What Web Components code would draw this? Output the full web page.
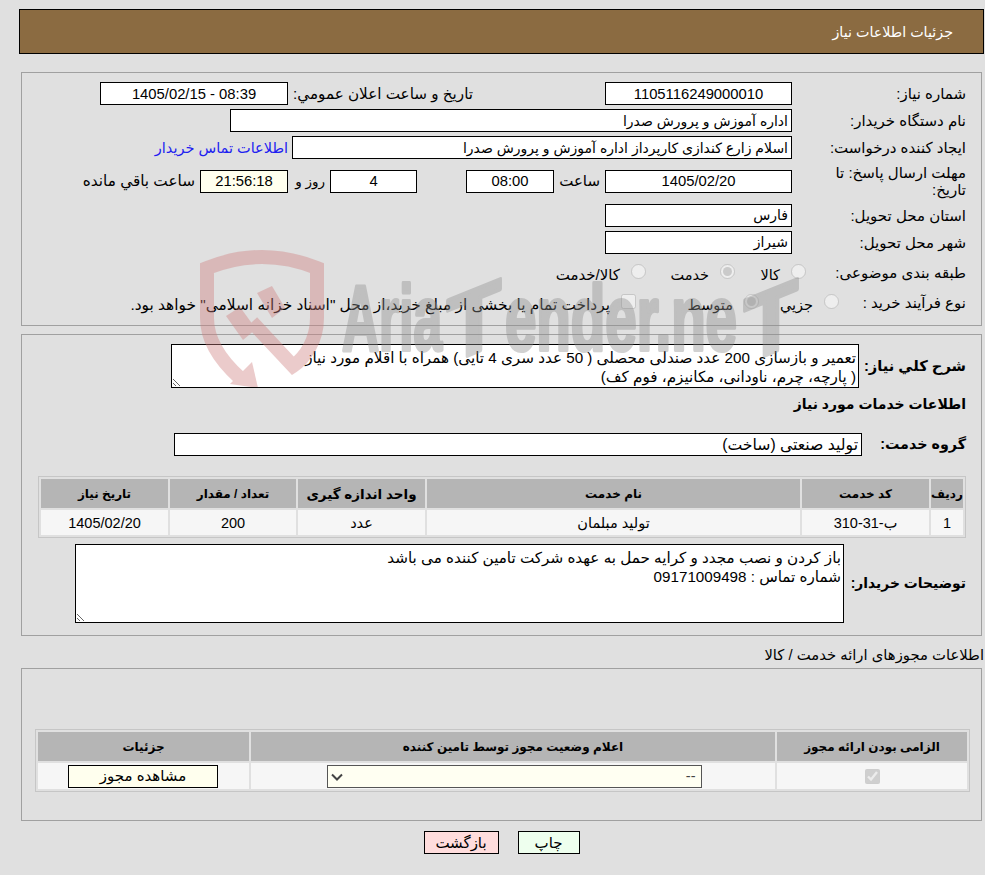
<!DOCTYPE html>
<html lang="fa" dir="rtl">
<head>
<meta charset="utf-8">
<title>جزئیات اطلاعات نیاز</title>
<style>
  html, body { margin: 0; padding: 0; background: #e0e0e0; }
  body {
    position: relative;
    height: 875px;
    overflow: hidden;
    font: 14.5px "Liberation Sans", "DejaVu Sans", sans-serif;
    color: #000;
  }
</style>
</head>
<body>
  <page-header>جزئیات اطلاعات نیاز</page-header>

  <info-panel style="margin-top:18px;height:254px">
    <form-row height="27" label="شماره نیاز:">
      <text-field center numeric style="width:187px">1105116249000010</text-field>
      <plain-text style="width:180px;margin-right:132px;font-size:15.2px">تاریخ و ساعت اعلان عمومي:</plain-text>
      <text-field center numeric dir="ltr" style="width:188px;margin-right:5px">1405/02/15 - 08:39</text-field>
    </form-row>
    <form-row height="27" label="نام دستگاه خریدار:">
      <text-field style="width:562px">اداره آموزش و پرورش صدرا</text-field>
    </form-row>
    <form-row height="27" label="ایجاد کننده درخواست:">
      <text-field style="width:500px">اسلام زارع کندازی کارپرداز اداره آموزش و پرورش صدرا</text-field>
      <plain-text style="color:#2020f0;margin-right:4px">اطلاعات تماس خریدار</plain-text>
    </form-row>
    <form-row height="40" label="مهلت ارسال پاسخ: تا&#10;تاریخ:">
      <text-field center numeric style="width:187px">1405/02/20</text-field>
      <plain-text style="width:51px;padding-right:5px;box-sizing:border-box;font-size:15px">ساعت</plain-text>
      <text-field center numeric style="width:88px">08:00</text-field>
      <text-field center numeric style="width:87px;margin-right:49px">4</text-field>
      <plain-text style="width:42px;padding-right:5px;box-sizing:border-box;font-size:13.5px">روز و</plain-text>
      <text-field center numeric style="width:88px;background:#ffffee">21:56:18</text-field>
      <plain-text style="margin-right:5px;font-size:15.3px">ساعت باقي مانده</plain-text>
    </form-row>
    <form-row height="28" label="استان محل تحویل:">
      <text-field style="width:187px">فارس</text-field>
    </form-row>
    <form-row height="26" label="شهر محل تحویل:">
      <text-field style="width:187px">شیراز</text-field>
    </form-row>
    <form-row height="34" label="طبقه بندی موضوعی:">
      <choice-item style="width:71px;margin:6px -14px 0 0" kind="radio">کالا</choice-item>
      <choice-item style="width:89px;margin-top:6px" kind="radio" checked>خدمت</choice-item>
      <choice-item style="margin-top:6px;font-size:15px" kind="radio">کالا/خدمت</choice-item>
    </form-row>
    <form-row height="26" label="نوع فرآیند خرید :">
      <choice-item style="width:80px;margin:6px -47px 0 0" kind="radio">جزیي</choice-item>
      <choice-item style="width:123px;margin-top:6px" kind="radio" checked>متوسط</choice-item>
      <choice-item style="margin-top:6px;font-size:15.4px" kind="checkbox">پرداخت تمام یا بخشی از مبلغ خرید،از محل "اسناد خزانه اسلامی" خواهد بود.</choice-item>
    </form-row>
  </info-panel>

  <info-panel style="margin-top:8px;height:302px;padding-top:9px">
    <form-row height="44" label-width="107" bold size="14.7" label="شرح کلي نیاز:">
      <note-box style="width:688px;height:44px">تعمیر و بازسازی 200 عدد صندلی محصلی ( 50 عدد سری 4 تایی) همراه با اقلام مورد نیاز
( پارچه، چرم، ناودانی، مکانیزم، فوم کف)</note-box>
    </form-row>
    <form-row height="32" label-width="400" bold size="14" label="اطلاعات خدمات مورد نیاز"></form-row>
    <form-row height="23" label-width="104" bold size="14.3" label="گروه خدمت:" style="margin-top:13px">
      <text-field style="width:688px;font-size:15.7px">تولید صنعتی (ساخت)</text-field>
    </form-row>
    <data-table columns="32px 127px 373px 127px 126px 127px" row-height="25px" style="margin:20px 0 0 15px;width:928px">
      <table-cell head>ردیف</table-cell>
      <table-cell head>کد خدمت</table-cell>
      <table-cell head>نام خدمت</table-cell>
      <table-cell head style="font-size:13.5px">واحد اندازه گیری</table-cell>
      <table-cell head>تعداد / مقدار</table-cell>
      <table-cell head>تاریخ نیاز</table-cell>
      <table-cell>1</table-cell>
      <table-cell>ب-31-310</table-cell>
      <table-cell>تولید مبلمان</table-cell>
      <table-cell>عدد</table-cell>
      <table-cell>200</table-cell>
      <table-cell>1405/02/20</table-cell>
    </data-table>
    <form-row height="79" label-width="122" bold size="13.9" label="توضیحات خریدار:" style="margin-top:6px">
      <note-box style="width:769px;height:79px">باز کردن و نصب مجدد و کرایه حمل به عهده شرکت تامین کننده می باشد
شماره تماس : 09171009498</note-box>
    </form-row>
  </info-panel>

  <section-title>اطلاعات مجوزهای ارائه خدمت / کالا</section-title>

  <info-panel style="height:153px">
    <data-table columns="190px 524px 211px" row-height="26px" style="margin:53px -4px 0 0;width:935px">
      <table-cell head>الزامی بودن ارائه مجوز</table-cell>
      <table-cell head>اعلام وضعیت مجوز توسط تامین کننده</table-cell>
      <table-cell head>جزئیات</table-cell>
      <table-cell><choice-item kind="checkbox" checked style="margin-top:8px"></choice-item></table-cell>
      <table-cell><status-select style="margin-left:2px"></status-select></table-cell>
      <table-cell><action-button style="width:150px;margin-right:1px;background:#ffffee">مشاهده مجوز</action-button></table-cell>
    </data-table>
  </info-panel>

  <action-bar>
    <action-button style="width:62px;background:#eeffee">چاپ</action-button>
    <action-button style="width:75px;background:#ffdddd">بازگشت</action-button>
  </action-bar>

  <tender-watermark></tender-watermark>

<script>
  class PageHeader extends HTMLElement {
    constructor() {
      super();
      this.attachShadow({ mode: "open" }).innerHTML = `
        <style>
          :host {
            display: flex;
            align-items: center;
            box-sizing: border-box;
            height: 45px;
            margin: 9px 1px 0 0;
            width: 965px;
            padding: 0 30px;
            background: #8b6b41;
            border: 1px solid #000;
            color: #fff;
            font-size: 14.3px;
          }
        </style>
        <slot></slot>`;
    }
  }

  class InfoPanel extends HTMLElement {
    constructor() {
      super();
      this.attachShadow({ mode: "open" }).innerHTML = `
        <style>
          :host {
            display: block;
            box-sizing: border-box;
            width: 961px;
            margin-right: 3px;
            padding: 7px 15px 0 0;
            border: 1px solid #a0a0a0;
          }
        </style>
        <slot></slot>`;
    }
  }

  class FormRow extends HTMLElement {
    constructor() {
      super();
      const label = this.getAttribute("label") || "";
      const labelWidth = this.getAttribute("label-width") || "174";
      const height = this.getAttribute("height") || "27";
      const weight = this.hasAttribute("bold") ? "700" : "400";
      const size = this.getAttribute("size") || "15";
      this.attachShadow({ mode: "open" }).innerHTML = `
        <style>
          :host {
            display: flex;
            align-items: center;
            height: ${height}px;
          }
          .label {
            flex: 0 0 ${labelWidth}px;
            min-width: 0;
            box-sizing: border-box;
            line-height: 17px;
            white-space: pre;
            font-weight: ${weight};
            font-size: ${size}px;
          }
        </style>
        <div class="label">${label}</div>
        <slot></slot>`;
    }
  }

  class PlainText extends HTMLElement {
    constructor() {
      super();
      this.attachShadow({ mode: "open" }).innerHTML = `
        <style>
          :host { display: block; flex: none; white-space: nowrap; }
        </style>
        <slot></slot>`;
    }
  }

  class TextField extends HTMLElement {
    constructor() {
      super();
      const align = this.hasAttribute("center") ? "center" : "start";
      const size = this.hasAttribute("numeric") ? "14.8px" : "14px";
      this.attachShadow({ mode: "open" }).innerHTML = `
        <style>
          :host {
            display: flex;
            flex: none;
            align-items: center;
            justify-content: ${align};
            box-sizing: border-box;
            height: 23px;
            padding: 0 3px;
            background: #fff;
            border: 1px solid #000;
            font-size: ${size};
            white-space: nowrap;
            overflow: hidden;
          }
        </style>
        <slot></slot>`;
    }
  }

  class NoteBox extends HTMLElement {
    constructor() {
      super();
      const root = this.attachShadow({ mode: "open" });
      root.innerHTML = `
        <style>
          :host { display: block; flex: none; }
          textarea {
            display: block;
            box-sizing: border-box;
            width: 100%;
            height: 100%;
            margin: 0;
            padding: 4px 2px;
            font: inherit;
            font-size: 15.2px;
            line-height: 18.5px;
            color: inherit;
            background: #fff;
            border: 1px solid #000;
            border-radius: 0;
            outline: none;
            overflow: hidden;
            resize: both;
          }
        </style>
        <textarea readonly dir="rtl"></textarea>`;
      root.querySelector("textarea").textContent = this.textContent;
    }
  }

  class ChoiceItem extends HTMLElement {
    constructor() {
      super();
      const kind = this.getAttribute("kind") || "radio";
      const checked = this.hasAttribute("checked") ? "checked" : "";
      this.attachShadow({ mode: "open" }).innerHTML = `
        <style>
          :host {
            display: flex;
            flex: none;
            align-items: center;
            gap: 5px;
            white-space: nowrap;
          }
          input {
            width: 15px;
            height: 15px;
            margin: -8px 0 0 0;
            flex: none;
          }
          .text { margin-right: 6px; }
          :host(:empty) .text { display: none; }
        </style>
        <input type="${kind}" disabled ${checked}>
        <span class="text"><slot></slot></span>`;
    }
  }

  class DataTable extends HTMLElement {
    constructor() {
      super();
      const columns = this.getAttribute("columns");
      const rowHeight = this.getAttribute("row-height");
      this.attachShadow({ mode: "open" }).innerHTML = `
        <style>
          :host {
            display: block;
            box-sizing: border-box;
            padding: 2px;
            border: 1px solid #c6c6c6;
          }
          .grid {
            display: grid;
            grid-template-columns: ${columns};
            grid-template-rows: 29px ${rowHeight};
            gap: 2px;
          }
        </style>
        <div class="grid"><slot></slot></div>`;
    }
  }

  class TableCell extends HTMLElement {
    constructor() {
      super();
      this.attachShadow({ mode: "open" }).innerHTML = `
        <style>
          :host {
            display: flex;
            align-items: center;
            justify-content: center;
            background: #f6f6f6;
            white-space: nowrap;
          }
          :host([head]) {
            background: #b5b5b5;
            font-weight: 700;
            font-size: 12px;
          }
        </style>
        <slot></slot>`;
    }
  }

  class StatusSelect extends HTMLElement {
    constructor() {
      super();
      this.attachShadow({ mode: "open" }).innerHTML = `
        <style>
          :host { display: block; position: relative; }
          select {
            display: block;
            width: 375px;
            height: 23px;
            padding: 0 5px;
            font: inherit;
            color: #444;
            opacity: 1;
            background-color: #fffff2;
            border: 1px solid #555;
            border-radius: 0;
            appearance: none;
          }
          svg { position: absolute; left: 4px; top: 8px; }
        </style>
        <select disabled dir="rtl"><option>--</option></select>
        <svg width="12" height="8" viewBox="0 0 12 8"><path d="M1 1.5L6 6.5 11 1.5" fill="none" stroke="#444" stroke-width="2"/></svg>`;
    }
  }

  class ActionButton extends HTMLElement {
    constructor() {
      super();
      this.attachShadow({ mode: "open" }).innerHTML = `
        <style>
          :host {
            display: flex;
            align-items: center;
            justify-content: center;
            box-sizing: border-box;
            height: 23px;
            border: 1px solid #000;
            font-size: 15px;
            cursor: pointer;
          }
        </style>
        <slot></slot>`;
    }
  }

  class ActionBar extends HTMLElement {
    constructor() {
      super();
      this.attachShadow({ mode: "open" }).innerHTML = `
        <style>
          :host {
            display: flex;
            justify-content: center;
            gap: 19px;
            width: 1003px;
            margin: 10px -18px 0 0;
          }
        </style>
        <slot></slot>`;
    }
  }

  class SectionTitle extends HTMLElement {
    constructor() {
      super();
      this.attachShadow({ mode: "open" }).innerHTML = `
        <style>
          :host {
            display: flex;
            align-items: center;
            height: 28px;
            padding: 4px 1px 0 0;
            font-size: 14.8px;
          }
        </style>
        <slot></slot>`;
    }
  }

  // the watermark lies over the whole form, so it is the one absolute piece
  class TenderWatermark extends HTMLElement {
    constructor() {
      super();
      this.attachShadow({ mode: "open" }).innerHTML = `
        <style>
          :host {
            position: absolute;
            left: 190px;
            top: 245px;
            width: 620px;
            height: 142px;
            pointer-events: none;
          }
          svg { display: block; opacity: .4; overflow: hidden; }
          text {
            font-family: "Liberation Sans", sans-serif;
            font-weight: 700;
            font-size: 92px;
            fill: #8e8e8e;
            stroke: #8e8e8e;
            stroke-width: 4px;
            stroke-linejoin: round;
            direction: ltr;
          }
        </style>
        <svg width="620" height="142" viewBox="190 245 620 142" dir="ltr">
          <g fill="#cf7f7f">
            <path fill="none" stroke="#cf7f7f" stroke-width="14" d="M240 378C220 360 207 340 207 318V268Q262 246 317 268V318C317 340 305 358 293 366L252 322"/>
            <path d="M226 316L240 307 256 329 243 340Z"/>
            <path d="M257 293L272 286 285 308 272 318Z"/>
            <path d="M252 362L258 388 230 384Z"/>
          </g>
          <text x="342" y="350" textLength="100" lengthAdjust="spacingAndGlyphs">Aria</text>
          <text transform="translate(447 350) skewY(-22) translate(0 14)" textLength="54" lengthAdjust="spacingAndGlyphs">T</text>
          <text x="505" y="350" textLength="232" lengthAdjust="spacingAndGlyphs">ender.ne</text>
          <text transform="translate(744 350) skewY(-22) translate(0 14)" textLength="54" lengthAdjust="spacingAndGlyphs">T</text>
        </svg>`;
    }
  }

  customElements.define("page-header", PageHeader);
  customElements.define("info-panel", InfoPanel);
  customElements.define("form-row", FormRow);
  customElements.define("plain-text", PlainText);
  customElements.define("text-field", TextField);
  customElements.define("note-box", NoteBox);
  customElements.define("choice-item", ChoiceItem);
  customElements.define("data-table", DataTable);
  customElements.define("table-cell", TableCell);
  customElements.define("status-select", StatusSelect);
  customElements.define("action-button", ActionButton);
  customElements.define("action-bar", ActionBar);
  customElements.define("section-title", SectionTitle);
  customElements.define("tender-watermark", TenderWatermark);
</script>
</body>
</html>
